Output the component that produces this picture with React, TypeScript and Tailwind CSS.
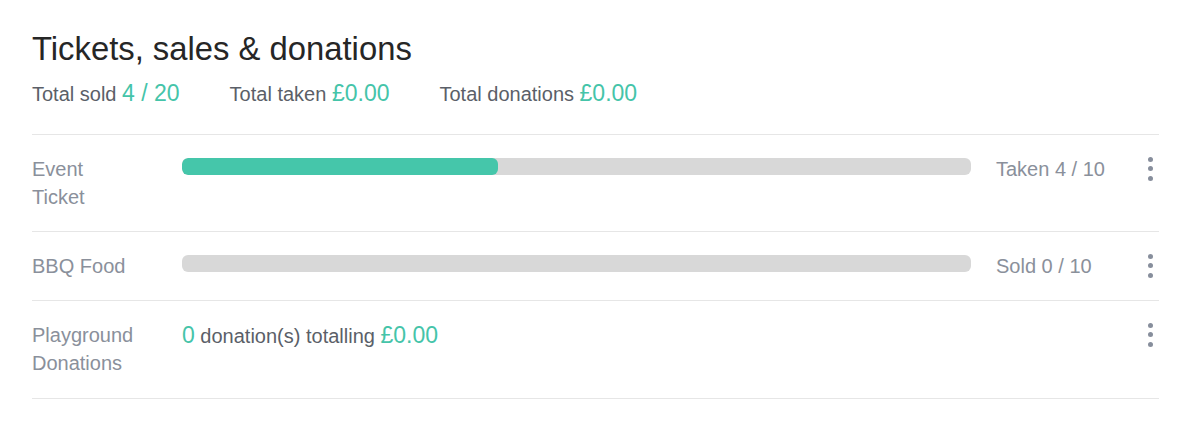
type Row = {
  label: string;
  kind: "bar" | "donation";
  done?: number;
  total?: number;
  verb?: string;
  count?: number;
  amount?: string;
};

const rows: Row[] = [
  { label: "Event Ticket", kind: "bar", done: 4, total: 10, verb: "Taken" },
  { label: "BBQ Food", kind: "bar", done: 0, total: 10, verb: "Sold" },
  { label: "Playground Donations", kind: "donation", count: 0, amount: "£0.00" },
];

function Dots() {
  return (
    <button className="flex w-[18px] flex-col items-center gap-[4.5px] pt-[1.5px]">
      <span className="h-[5px] w-[5px] rounded-full bg-[#878e9c]" />
      <span className="h-[5px] w-[5px] rounded-full bg-[#878e9c]" />
      <span className="h-[5px] w-[5px] rounded-full bg-[#878e9c]" />
    </button>
  );
}

export default function App() {
  return (
    <div className="min-h-[422px] bg-white pl-[32px] pr-[22px] pt-[29px] font-['Liberation_Sans',Arial,sans-serif] text-[20px]">
      <div className="border-b border-[#e6e6e6] pb-[26px]">
        <h2 className="text-[32.8px] leading-[40px] text-[#262626]">Tickets, sales &amp; donations</h2>
        <div className="mt-[10px] flex items-baseline gap-[50px] leading-[28px] text-[#5b5f68]">
          <div>
            Total sold <span className="text-[23px] text-[#45c4a9]">4 / 20</span>
          </div>
          <div>
            Total taken <span className="text-[23px] text-[#45c4a9]">£0.00</span>
          </div>
          <div>
            Total donations <span className="text-[23px] text-[#45c4a9]">£0.00</span>
          </div>
        </div>
      </div>

      {rows.map((row) => (
        <div
          key={row.label}
          className="flex items-start border-b border-[#e6e6e6] pt-[20px] pb-[20px] leading-[28px] last:pb-[21px]"
        >
          <div className="w-[106px] shrink-0 text-[#8a909b]">{row.label}</div>
          <div className="ml-[44px] flex flex-1 items-start">
            {row.kind === "bar" ? (
              <>
                <div className="mt-[3px] h-[17px] flex-1 overflow-hidden rounded-[6px] bg-[#d8d8d8]">
                  <div
                    className="h-full rounded-[6px] bg-[#45c6aa]"
                    style={{ width: `${((row.done ?? 0) / (row.total ?? 1)) * 100}%` }}
                  />
                </div>
                <div className="ml-[25px] w-[145px] text-[#8a909b]">
                  {row.verb} {row.done} / {row.total}
                </div>
              </>
            ) : (
              <div className="flex-1 text-[#5b5f68]">
                <span className="text-[23px] text-[#45c4a9]">{row.count}</span> donation(s) totalling{" "}
                <span className="text-[23px] text-[#45c4a9]">{row.amount}</span>
              </div>
            )}
            <Dots />
          </div>
        </div>
      ))}
    </div>
  );
}
